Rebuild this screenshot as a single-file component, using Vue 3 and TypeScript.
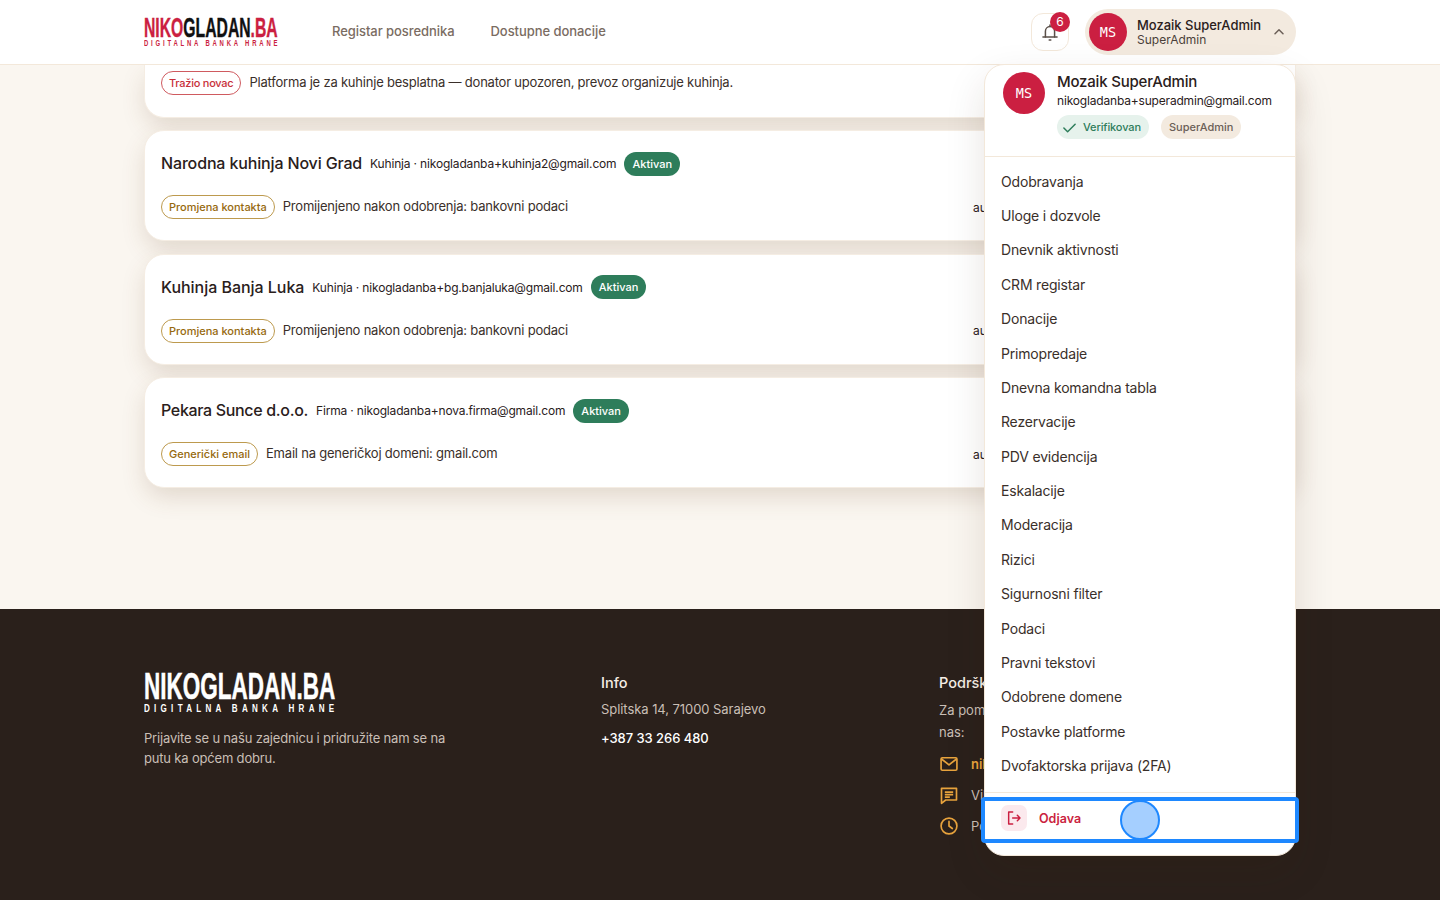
<script setup lang="ts">
interface Card { name: string; meta: string; flag: string; note: string; kind: string }
const cards: Card[] = [
  { name: 'Narodna kuhinja Novi Grad', meta: 'Kuhinja · nikogladanba+kuhinja2@gmail.com', flag: 'Promjena kontakta', note: 'Promijenjeno nakon odobrenja: bankovni podaci', kind: 'amber' },
  { name: 'Kuhinja Banja Luka', meta: 'Kuhinja · nikogladanba+bg.banjaluka@gmail.com', flag: 'Promjena kontakta', note: 'Promijenjeno nakon odobrenja: bankovni podaci', kind: 'amber' },
  { name: 'Pekara Sunce d.o.o.', meta: 'Firma · nikogladanba+nova.firma@gmail.com', flag: 'Generički email', note: 'Email na generičkoj domeni: gmail.com', kind: 'amber' },
]
const menu: string[] = ['Odobravanja', 'Uloge i dozvole', 'Dnevnik aktivnosti', 'CRM registar', 'Donacije', 'Primopredaje', 'Dnevna komandna tabla', 'Rezervacije', 'PDV evidencija', 'Eskalacije', 'Moderacija', 'Rizici', 'Sigurnosni filter', 'Podaci', 'Pravni tekstovi', 'Odobrene domene', 'Postavke platforme', 'Dvofaktorska prijava (2FA)']
</script>

<template>
  <div class="page">
    <header class="top">
      <div class="logo">
        <div class="logo-main"><span class="red">NIKO</span><span>GLADAN</span><span class="red">.BA</span></div>
        <div class="logo-sub">DIGITALNA BANKA HRANE</div>
      </div>
      <nav class="nav">
        <a>Registar posrednika</a>
        <a>Dostupne donacije</a>
      </nav>
      <div class="top-right">
        <button class="bell">
          <svg width="20" height="20" viewBox="0 0 24 24" fill="none" stroke="#5a4f48" stroke-width="1.800" stroke-linecap="round" stroke-linejoin="round"><path d="M6.500 18V11a5.500 5.500 0 0 1 11 0v7" /><path d="M3.500 18h17" /><path d="M11 21.500h2" /><path d="M12 3.500v2" /></svg>
          <span class="count">6</span>
        </button>
        <div class="user">
          <span class="avatar small">MS</span>
          <span class="user-text"><b>Mozaik SuperAdmin</b><small>SuperAdmin</small></span>
          <svg class="chev" width="12" height="12" viewBox="0 0 12 12" fill="none" stroke="#6b5f57" stroke-width="1.500" stroke-linecap="round" stroke-linejoin="round"><path d="M2 7.800 6 3.800l4 4" /></svg>
        </div>
      </div>
    </header>

    <main class="main">
      <article class="card first">
        <div class="row">
          <span class="flag red-flag">Tražio novac</span>
          <span class="note">Platforma je za kuhinje besplatna — donator upozoren, prevoz organizuje kuhinja.</span>
        </div>
      </article>
      <article v-for="c in cards" :key="c.name" class="card">
        <div class="head">
          <h3>{{ c.name }}</h3>
          <span class="meta">{{ c.meta }}</span>
          <span class="active">Aktivan</span>
        </div>
        <div class="row">
          <span class="flag amber">{{ c.flag }}</span>
          <span class="note">{{ c.note }}</span>
          <span class="auto">automatski</span>
        </div>
      </article>
    </main>

    <footer class="foot">
      <div class="f-brand">
        <div class="f-logo">NIKOGLADAN.BA</div>
        <div class="f-sub">DIGITALNA BANKA HRANE</div>
        <p>Prijavite se u našu zajednicu i pridružite nam se na putu ka općem dobru.</p>
      </div>
      <div class="f-info">
        <h4>Info</h4>
        <p>Splitska 14, 71000 Sarajevo</p>
        <p class="phone">+387 33 266 480</p>
      </div>
      <div class="f-help">
        <h4>Podrška</h4>
        <p class="help-text">Za pomoć kontaktirajte<br>nas:</p>
        <div class="line"><svg width="20" height="20" viewBox="0 0 24 24" fill="none" stroke="#e8a33d" stroke-width="2" stroke-linejoin="round"><rect x="2.500" y="4.500" width="19" height="15" rx="1.500" /><path d="m3 6 9 7 9-7" /></svg><span class="mail">nikogladan@gmail.com</span></div>
        <div class="line"><svg width="20" height="20" viewBox="0 0 24 24" fill="none" stroke="#e8a33d" stroke-width="2" stroke-linejoin="round"><path d="M3 4h18v14H8l-5 4z" /><path d="M7 8.500h10M7 11.500h10M7 14.500h6" /></svg><span>Viber i WhatsApp</span></div>
        <div class="line"><svg width="20" height="20" viewBox="0 0 24 24" fill="none" stroke="#e8a33d" stroke-width="2" stroke-linecap="round"><circle cx="12" cy="12" r="9.500" /><path d="M12 6.500V12l4 3" /></svg><span>Pon - Pet</span></div>
      </div>
    </footer>

    <aside class="drop">
      <div class="drop-head">
        <span class="avatar big">MS</span>
        <div class="drop-id">
          <div class="drop-name">Mozaik SuperAdmin</div>
          <div class="drop-mail">nikogladanba+superadmin@gmail.com</div>
          <div class="chips">
            <span class="chip green"><svg width="15" height="15" viewBox="0 0 16 16" fill="none" stroke="#2e7d5b" stroke-width="1.600" stroke-linecap="round" stroke-linejoin="round"><path d="m2 8.500 4 4 8-8" /></svg>Verifikovan</span>
            <span class="chip sand">SuperAdmin</span>
          </div>
        </div>
      </div>
      <ul class="menu">
        <li v-for="m in menu" :key="m">{{ m }}</li>
      </ul>
      <div class="logout">
        <span class="log-ic"><svg width="16" height="16" viewBox="0 0 24 24" fill="none" stroke="#cb1f41" stroke-width="2.200" stroke-linecap="round" stroke-linejoin="round"><path d="M10 3H4v18h6" /><path d="M10 12h11M17 8l4 4-4 4" /></svg></span>
        <span>Odjava</span>
      </div>
    </aside>
    <div class="focus"></div>
    <div class="touch"></div>
  </div>
</template>

<style>
html, body { margin: 0; padding: 0; }
</style>

<style scoped>
.page { position: relative; width: 1440px; height: 900px; overflow: hidden; background: #faf6f0; font-family: Inter, "Liberation Sans", sans-serif; color: #2a201b; }
.top { position: relative; z-index: 2; height: 65px; box-sizing: border-box; background: #fff; border-bottom: 1px solid #f3e8da; display: flex; align-items: center; padding: 0 144px; }
.logo { width: 135px; margin-right: 53px; flex: none; margin-top: 1px; }
.logo-main { font-weight: 700; font-family: "Liberation Sans", sans-serif; font-size: 27.600px; line-height: 20px; color: #111; transform: scaleX(.57); transform-origin: left; white-space: nowrap; height: 20px; -webkit-text-stroke: .4px currentColor; }
.logo-sub { font-family: "Liberation Sans", sans-serif; font-weight: 700; font-size: 8.500px; line-height: 8px; letter-spacing: 4px; color: #cb1f41; white-space: nowrap; margin-top: 1px; transform: scaleX(.7); transform-origin: left; }
.red { color: #cb1f41; }
.nav { display: flex; gap: 36px; font-size: 13px; font-weight: 500; letter-spacing: -.060px; color: #7a6c62; margin-top: -2px; }
.top-right { margin-left: auto; display: flex; align-items: center; gap: 16px; }
.bell { position: relative; width: 38px; height: 38px; padding: 0; box-sizing: border-box; background: #fff; border: 1px solid #f3e8da; border-radius: 12px; display: flex; align-items: center; justify-content: center; }
.count { position: absolute; top: -2px; right: -2px; width: 20px; height: 20px; border-radius: 50%; background: #cb1f41; color: #fff; font-size: 12px; line-height: 20px; text-align: center; font-family: Inter, sans-serif; }
.user { width: 211px; height: 46px; box-sizing: border-box; padding: 0 11px 0 4px; border-radius: 23px; background: #f3eadf; display: flex; align-items: center; }
.avatar { display: flex; align-items: center; justify-content: center; flex: none; border-radius: 50%; background: #cb1f41; color: #fff; font-family: "DejaVu Sans Mono", monospace; }
.avatar.small { width: 38px; height: 38px; font-size: 13.500px; }
.avatar.big { width: 42px; height: 42px; font-size: 13.500px; }
.user-text { display: flex; flex-direction: column; margin-left: 10px; flex: 1; }
.user-text b { font-size: 13px; font-weight: 500; line-height: 16px; letter-spacing: -.020px; }
.user-text small { font-size: 12px; line-height: 14px; color: #4a3f39; }
.main { height: 544px; box-sizing: border-box; padding: 0 144px; display: flex; flex-direction: column; gap: 12.800px; overflow: hidden; }
.card { background: #fff; border: 1px solid #f5ede3; border-radius: 20px; box-shadow: 0 10px 24px -2px rgba(110, 70, 40, .18); height: 110.800px; box-sizing: border-box; padding: 0 16px; flex: none; }
.card.first { height: 52.500px; border-top: none; border-radius: 0 0 20px 20px; padding-top: 6px; }
.head { display: flex; align-items: center; gap: 8px; height: 28px; margin-top: 18px; }
.head h3 { margin: 0; font-size: 16px; font-weight: 500; letter-spacing: -.150px; }
.card:nth-child(3) h3 { letter-spacing: -.040px; }
.card:nth-child(4) h3 { letter-spacing: -.330px; }
.meta { font-size: 12px; letter-spacing: -.170px; margin-top: 1px; }
.active { height: 24px; line-height: 24px; padding: 0 8px; border-radius: 12px; background: #2e7d5b; color: #fff; font-size: 11px; font-weight: 500; margin-top: 1px; }
.row { display: flex; align-items: center; gap: 8px; margin-top: 18px; height: 24px; }
.card.first .row { margin-top: 0; }
.flag { height: 24px; box-sizing: border-box; line-height: 22px; padding: 0 7px; border-radius: 12px; border: 1px solid; font-size: 11px; font-weight: 500; white-space: nowrap; }
.red-flag { color: #c8303a; border-color: #cf5a5f; letter-spacing: -.250px; }
.amber { color: #96690e; border-color: #bd9a4e; letter-spacing: -.010px; }
.note { font-size: 13px; color: #3a2f2a; letter-spacing: -.210px; margin-top: -2.500px; }
.auto { margin-left: auto; width: 306px; font-size: 12px; flex: none; }
.foot { height: 291px; box-sizing: border-box; background: #2a201b; padding: 63px 144px 0; display: grid; grid-template-columns: 457px 338px 1fr; color: #c9bfb6; }
.f-logo { font-family: "Liberation Sans", sans-serif; font-weight: 700; font-size: 36.300px; line-height: 30px; color: #fff; white-space: nowrap; transform: scaleX(.62); transform-origin: left; width: 193px; -webkit-text-stroke: .5px currentColor; }
.f-sub { font-family: "Liberation Sans", sans-serif; font-weight: 700; font-size: 11.500px; line-height: 10px; letter-spacing: 6.100px; color: #fff; white-space: nowrap; transform: scaleX(.7); transform-origin: left; margin-top: 1px; width: 193px; }
.f-brand p { width: 320px; margin: 15px 0 0; font-size: 13px; line-height: 20px; letter-spacing: -.180px; }
.foot h4 { margin: 1px 0 0; font-size: 14.500px; font-weight: 500; color: #f5eee6; line-height: 20px; }
.f-info p { margin: 6px 0 0; font-size: 13px; line-height: 20px; letter-spacing: -.060px; }
.f-info .phone { margin-top: 9px; color: #fff; font-weight: 500; }
.help-text { margin: 7px 0 0; font-size: 13px; line-height: 21.500px; width: 180px; }
.line { display: flex; align-items: center; gap: 12px; height: 31px; font-size: 13px; white-space: nowrap; }
.help-text + .line { margin-top: 5px; }
.mail { color: #e8a33d; font-weight: 600; }
.drop { position: absolute; z-index: 3; left: 984px; top: 64px; width: 312px; height: 792px; box-sizing: border-box; background: #fff; border: 1px solid #f3e8da; border-radius: 20px; box-shadow: 0 16px 40px rgba(60, 30, 10, .12); }
.drop-head { display: flex; gap: 12px; height: 92px; box-sizing: border-box; padding: 7px 18px 0; border-bottom: 1px solid #f3e8da; }
.drop-name { font-size: 15px; font-weight: 500; line-height: 20px; letter-spacing: -.200px; }
.drop-mail { font-size: 12px; line-height: 18px; white-space: nowrap; letter-spacing: -.180px; }
.chips { display: flex; gap: 12px; margin-top: 5px; }
.chip { height: 24px; line-height: 24px; border-radius: 12px; padding: 0 8px; font-size: 11px; font-weight: 500; display: flex; align-items: center; gap: 6px; }
.chip.green { background: #e6f2ec; color: #2e7d5b; padding-left: 5px; letter-spacing: -.120px; }
.chip.sand { background: #f3eadf; color: #6b5f57; }
.menu { list-style: none; margin: 0; padding: 7.700px 16px 0; height: 636px; box-sizing: border-box; border-bottom: 1px solid #f3e8da; }
.menu li { font-size: 14px; line-height: 22.380px; padding: 6px 0; color: #3a2f2a; letter-spacing: -.180px; }
.logout { display: flex; align-items: center; gap: 12px; padding: 12px 16px 0; font-size: 12.500px; font-weight: 600; color: #cb1f41; }
.log-ic { width: 26px; height: 26px; border-radius: 7px; background: #fbe9ed; display: flex; align-items: center; justify-content: center; }
.focus { position: absolute; z-index: 4; left: 981px; top: 797px; width: 318px; height: 46px; box-sizing: border-box; border: 4px solid #1e88ff; border-radius: 4px; }
.touch { position: absolute; z-index: 5; left: 1120px; top: 800px; width: 40px; height: 40px; box-sizing: border-box; border: 2px solid #1e88ff; border-radius: 50%; background: rgba(30, 136, 255, .4); }
</style>
